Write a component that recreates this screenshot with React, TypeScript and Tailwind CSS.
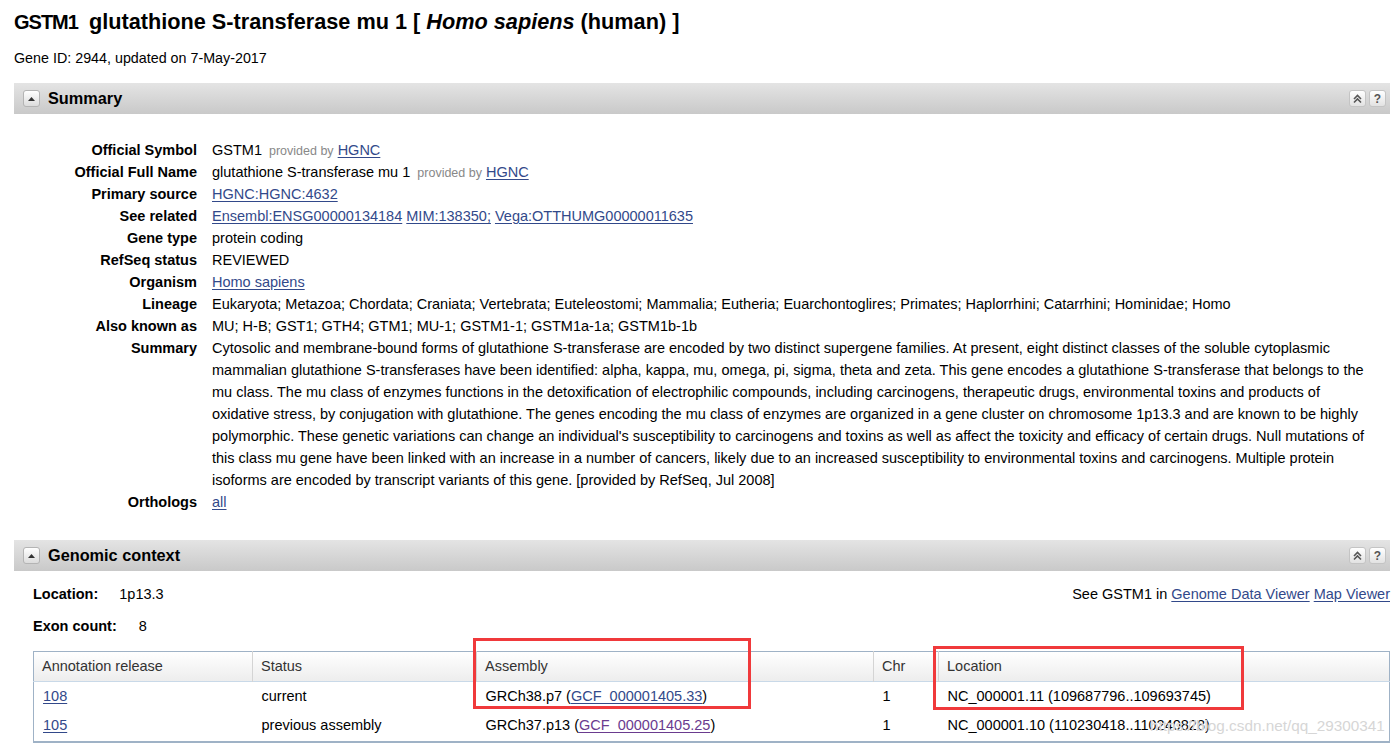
import React from 'react';

const link = 'text-[#32498a] underline underline-offset-2';

const ToggleBtn = () => (
  <span className="w-[17px] h-[17px] rounded-[3px] border border-[#b4b4b4] bg-gradient-to-b from-white to-[#dcdcdc] flex items-center justify-center">
    <svg width="9" height="6" viewBox="0 0 9 6">
      <path d="M1 5 L4.5 1 L8 5 Z" fill="#333" />
    </svg>
  </span>
);

const SectionBar = ({ title }: { title: string }) => (
  <div className="h-[31px] bg-gradient-to-b from-[#e4e4e4] to-[#c9c9c9] flex items-center pl-[9px] pr-[4px]">
    <ToggleBtn />
    <span className="ml-[8px] font-bold text-[16.3px] text-black">{title}</span>
    <div className="ml-auto flex gap-[3px]">
      <span className="w-[17px] h-[17px] rounded-[3px] border border-[#c4c4c4] bg-gradient-to-b from-white to-[#e2e2e2] flex items-center justify-center">
        <svg width="9" height="10" viewBox="0 0 9 10">
          <path d="M1 5 L4.5 1.5 L8 5 M1 8.5 L4.5 5 L8 8.5" fill="none" stroke="#555" strokeWidth="1.6" />
        </svg>
      </span>
      <span className="w-[17px] h-[17px] rounded-[3px] border border-[#c4c4c4] bg-gradient-to-b from-white to-[#e2e2e2] flex items-center justify-center text-[12px] font-bold text-[#555] leading-none">
        ?
      </span>
    </div>
  </div>
);

const small = 'text-[12.5px] leading-none text-[#888] ml-[3px]';

const rows: { label: string; value: React.ReactNode }[] = [
  {
    label: 'Official Symbol',
    value: (
      <>
        GSTM1 <span className={small}>provided by</span> <a className={link}>HGNC</a>
      </>
    ),
  },
  {
    label: 'Official Full Name',
    value: (
      <>
        glutathione S-transferase mu 1 <span className={small}>provided by</span> <a className={link}>HGNC</a>
      </>
    ),
  },
  { label: 'Primary source', value: <a className={link}>HGNC:HGNC:4632</a> },
  {
    label: 'See related',
    value: (
      <>
        <a className={link}>Ensembl:ENSG00000134184</a> <a className={link}>MIM:138350;</a>{' '}
        <a className={link}>Vega:OTTHUMG00000011635</a>
      </>
    ),
  },
  { label: 'Gene type', value: 'protein coding' },
  { label: 'RefSeq status', value: 'REVIEWED' },
  { label: 'Organism', value: <a className={link}>Homo sapiens</a> },
  {
    label: 'Lineage',
    value:
      'Eukaryota; Metazoa; Chordata; Craniata; Vertebrata; Euteleostomi; Mammalia; Eutheria; Euarchontoglires; Primates; Haplorrhini; Catarrhini; Hominidae; Homo',
  },
  { label: 'Also known as', value: 'MU; H-B; GST1; GTH4; GTM1; MU-1; GSTM1-1; GSTM1a-1a; GSTM1b-1b' },
  {
    label: 'Summary',
    value:
      "Cytosolic and membrane-bound forms of glutathione S-transferase are encoded by two distinct supergene families. At present, eight distinct classes of the soluble cytoplasmic mammalian glutathione S-transferases have been identified: alpha, kappa, mu, omega, pi, sigma, theta and zeta. This gene encodes a glutathione S-transferase that belongs to the mu class. The mu class of enzymes functions in the detoxification of electrophilic compounds, including carcinogens, therapeutic drugs, environmental toxins and products of oxidative stress, by conjugation with glutathione. The genes encoding the mu class of enzymes are organized in a gene cluster on chromosome 1p13.3 and are known to be highly polymorphic. These genetic variations can change an individual's susceptibility to carcinogens and toxins as well as affect the toxicity and efficacy of certain drugs. Null mutations of this class mu gene have been linked with an increase in a number of cancers, likely due to an increased susceptibility to environmental toxins and carcinogens. Multiple protein isoforms are encoded by transcript variants of this gene. [provided by RefSeq, Jul 2008]",
  },
  { label: 'Orthologs', value: <a className={link}>all</a> },
];

const tableRows = [
  {
    rel: '108',
    status: 'current',
    asm: 'GRCh38.p7',
    gcf: 'GCF_000001405.33',
    visited: false,
    loc: 'NC_000001.11 (109687796..109693745)',
  },
  {
    rel: '105',
    status: 'previous assembly',
    asm: 'GRCh37.p13',
    gcf: 'GCF_000001405.25',
    visited: true,
    loc: 'NC_000001.10 (110230418..110240828)',
  },
];

export default function App() {
  return (
    <div className="relative w-[1391px] h-[754px] overflow-hidden bg-white text-black text-[14.5px] font-['Liberation_Sans',Arial,sans-serif]">
      <div className="pl-[14px] pr-[1px] pt-[11px]">
        <h1 className="text-[21.7px] font-bold leading-[22px] whitespace-nowrap">
          <span className="text-[20px] tracking-[-1px]">GSTM1</span>
          <span className="ml-[11px]">
            glutathione S-transferase mu 1 [ <i>Homo sapiens</i> (human) ]
          </span>
        </h1>
        <div className="mt-[14px] leading-[22px] text-[14.3px]">Gene ID: 2944, updated on 7-May-2017</div>

        <div className="mt-[14px]">
          <SectionBar title="Summary" />
          <div className="grid grid-cols-[183px_1169px] gap-x-[15px] pt-[25px] leading-[22px]">
            {rows.map((r) => (
              <React.Fragment key={r.label}>
                <div className="text-right font-bold h-fit">{r.label}</div>
                <div>{r.value}</div>
              </React.Fragment>
            ))}
          </div>
        </div>

        <div className="mt-[27px]">
          <SectionBar title="Genomic context" />
          <div className="pl-[19px] pt-[12px]">
            <div className="flex leading-[22px]">
              <span className="font-bold">Location:</span>
              <span className="ml-[21px]">1p13.3</span>
              <span className="ml-auto">
                See GSTM1 in <a className={link}>Genome Data Viewer</a> <a className={link}>Map Viewer</a>
              </span>
            </div>
            <div className="flex leading-[22px] mt-[10px]">
              <span className="font-bold">Exon count:</span>
              <span className="ml-[22px]">8</span>
            </div>

            <table className="mt-[14px] w-[1357px] border border-[#9fb2c6] border-b-2 border-collapse table-fixed">
              <colgroup>
                <col className="w-[219px]" />
                <col className="w-[224px]" />
                <col className="w-[397px]" />
                <col className="w-[65px]" />
                <col />
              </colgroup>
              <thead>
                <tr className="h-[30px] bg-gradient-to-b from-white to-[#ededed] border-b border-[#c9d9e8] text-[#333]">
                  {['Annotation release', 'Status', 'Assembly', 'Chr', 'Location'].map((h, i) => (
                    <th
                      key={h}
                      className={`text-left font-normal pl-[8px] ${i > 0 ? 'border-l border-[#d4d4d4]' : ''}`}
                    >
                      {h}
                    </th>
                  ))}
                </tr>
              </thead>
              <tbody>
                {tableRows.map((r) => (
                  <tr key={r.rel} className="h-[30px]">
                    <td className="pl-[9px]">
                      <a className={link}>{r.rel}</a>
                    </td>
                    <td className="pl-[9px]">{r.status}</td>
                    <td className="pl-[9px]">
                      {r.asm} (
                      <a className={r.visited ? 'text-[#6a3b8f] underline underline-offset-2' : link}>{r.gcf}</a>)
                    </td>
                    <td className="pl-[9px]">1</td>
                    <td className="pl-[9px]">{r.loc}</td>
                  </tr>
                ))}
              </tbody>
            </table>
          </div>
        </div>
      </div>

      {/* red annotation boxes */}
      <div className="absolute left-[473px] top-[638px] w-[278px] h-[71px] border-[3px] border-[#f0393b]" />
      <div className="absolute left-[933px] top-[646px] w-[311px] h-[64px] border-[3px] border-[#f0393b]" />

      {/* watermark */}
      <div className="absolute left-[1150px] top-[717px] leading-[18px] text-[15.3px] text-[#d6d6d6] [text-shadow:0_0_1px_#fff]">
        https://blog.csdn.net/qq_29300341
      </div>
    </div>
  );
}
